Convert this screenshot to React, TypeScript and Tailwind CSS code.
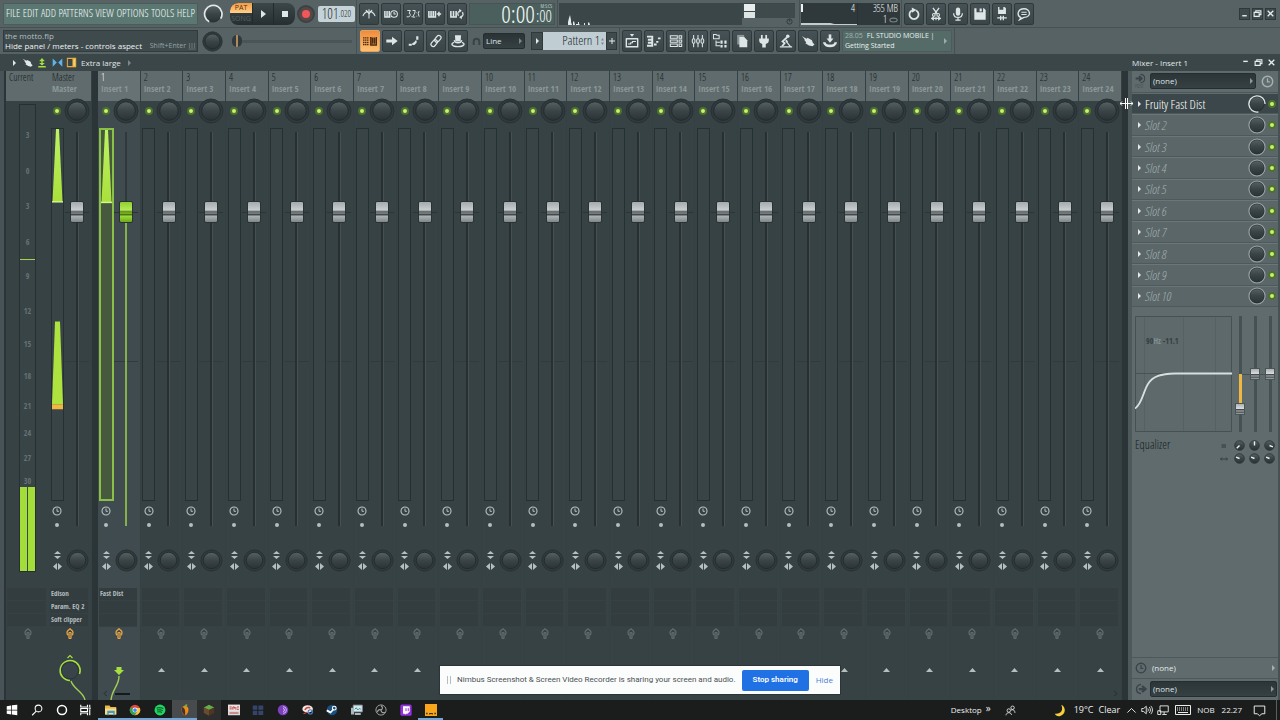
import React from "react";

const NARROW =
  "font-light font-['Open_Sans_Condensed_Light','Open_Sans_Condensed','Liberation_Sans_Narrow','Open_Sans',sans-serif]";
const NARROW_BOLD = "font-bold font-['Open_Sans_Condensed','Liberation_Sans_Narrow','Open_Sans',sans-serif]";
const SANS = "font-['Open_Sans','Noto_Sans',sans-serif]";

type IconProps = { children: React.ReactNode; size?: number; className?: string };

function Icon({ children, size = 16, className = "" }: IconProps) {
  return (
    <svg
      viewBox="0 0 16 16"
      width={size}
      height={size}
      className={"shrink-0 " + className}
      fill="none"
      stroke="currentColor"
      strokeWidth="1.2"
      aria-hidden="true"
    >
      {children}
    </svg>
  );
}

function Defs() {
  return (
    <svg className="absolute size-0" aria-hidden="true">
      <defs>
        <linearGradient id="knob" x1="0" y1="0" x2="0" y2="1">
          <stop offset="0" stopColor="#566164" />
          <stop offset="0.5" stopColor="#3a4447" />
          <stop offset="1" stopColor="#2a3235" />
        </linearGradient>
        <linearGradient id="meter" x1="0" y1="0" x2="0" y2="1">
          <stop offset="0" stopColor="#bdf264" />
          <stop offset="1" stopColor="#a9e03a" />
        </linearGradient>
      </defs>
    </svg>
  );
}

function Knob({ label, size = 26, ring }: { label: string; size?: number; ring?: "light" | "dim" | "part" }) {
  return (
    <button aria-label={label} className="block shrink-0 rounded-full">
      <svg viewBox="0 0 26 26" width={size} height={size} aria-hidden="true">
        {!ring && <circle cx="13" cy="13" r="12" fill="#303a3d" stroke="#283134" />}
        <circle cx="13" cy="13" r={ring ? 10.5 : 9.3} fill="url(#knob)" stroke="#222a2c" strokeWidth="1" />
        {ring === "light" && <path d="M8 23A11.300 11.300 0 1 1 23 19" fill="none" stroke="#e2e8e9" strokeWidth="2.200" />}
        {ring === "part" && <path d="M15 24.500A11.700 11.700 0 1 1 24.700 13" fill="none" stroke="#dbe2e3" strokeWidth="2" />}
        {ring === "dim" && <circle cx="13" cy="13" r="11.700" fill="none" stroke="#9aa5a6" strokeWidth="1.500" />}
      </svg>
    </button>
  );
}

function Led({ label }: { label: string }) {
  return (
    <input
      type="checkbox"
      defaultChecked
      aria-label={label}
      className="block size-2 shrink-0 appearance-none rounded-full border-2 border-[#4f7030] bg-[#c4f56c]"
    />
  );
}

function ClockIcon({ size = 10, className = "" }: { size?: number; className?: string }) {
  return (
    <Icon size={size} className={className}>
      <circle cx="8" cy="8" r="6.4" strokeWidth="1.8" />
      <path d="M8 4v4.500h3" strokeWidth="1.6" />
    </Icon>
  );
}

function Tri({ className = "" }: { className?: string }) {
  return (
    <svg viewBox="0 0 3 6" width="3" height="6" className={"shrink-0 " + className} fill="currentColor" aria-hidden="true">
      <path d="M0 0l3 3-3 3z" />
    </svg>
  );
}

function ToolButton({ label, active, children }: { label: string; active?: boolean; children: React.ReactNode }) {
  return (
    <button
      aria-label={label}
      className={
        "flex h-[22px] w-5 shrink-0 items-center justify-center rounded-xs border " +
        (active
          ? "border-[#e0a060] bg-linear-to-b from-[#f08c3c] to-[#ffc070] text-[#4a2a10]"
          : "border-[#2f393c] bg-linear-to-b from-[#465255] to-[#3a4548] text-[#dde5e6]")
      }
    >
      <Icon size={14}>{children}</Icon>
    </button>
  );
}

const rowOneTools: [string, React.ReactNode][] = [
  ["Metronome", <g key="a"><path d="M8 13V2.500M7 5C4 5.500 2 7.500 1 10.500M9 5c3 .5 5 2.500 6 5.500" /><path d="M4.500 3.500L8 7.500l3.500-4" strokeWidth="1.500" /></g>],
  ["Wait for input", <g key="a"><path d="M1 4.500v7h6.500M3.500 4.500v6M6 4.500v6" strokeWidth="1.700" /><circle cx="11.500" cy="8" r="3.800" /><path d="M11.500 5.800V8h2" /></g>],
  ["Countdown", <g key="a"><path d="M1.500 4h3.500L3.500 7.200c2.200 0 1.800 4-.8 4H.8M7.500 4h3L10 7 7.500 11.500h3M5.700 11h.6M12 6.500h.8M12 10.500h.8M15 4.500l-1 3 1 3.500" strokeWidth="1.100" /></g>],
  ["Overdub", <g key="a"><path d="M1 4.500v7h7.500v-7M3.500 4.500v6M6 4.500v6" strokeWidth="1.800" /><path d="M10 8h5M12.500 5.500v5" strokeWidth="1.800" /></g>],
  ["Loop record", <g key="a"><path d="M1 4.500v7h6v-7M4 4.500v6" strokeWidth="1.800" /><path d="M9.800 10A3.500 3.500 0 0 1 11.500 4.300M14 6a3.500 3.500 0 0 1-1.700 5.700" strokeWidth="1.400" /><path d="M10.500 2l3 2.200-3 2.300zM13.500 9.500l-3 2.200 3 2.300z" fill="currentColor" stroke="none" /></g>],
];

const rowTwoTools: [string, React.ReactNode][] = [
  ["Typing keyboard", <g key="a"><path d="M0 4.500h7M0 7h7M0 9.500h7M0 12h7" strokeDasharray="1.700 0.600" strokeWidth="1.500" /><path d="M9 3.500v9h6.500v-9M11.100 4v7M13.300 4v7" strokeWidth="1.800" /></g>],
  ["Auto scroll", <path key="a" d="M1.500 6.200H8V3.200L14.500 8 8 12.800v-3H1.500z" fill="currentColor" stroke="none" />],
  ["Step edit", <g key="a"><path d="M2 13.500h3.500V11H2zM6 12.500h2.500L11 10V7.500H9.500L8.500 9 6 10.500zM10.500 6.500h2.500V2.500h-2.500z" fill="currentColor" stroke="none" /></g>],
  ["Link", <g key="a" transform="rotate(-50 8 8)"><rect x="0.500" y="5.500" width="8.500" height="5" rx="2.500" strokeWidth="1.400" /><rect x="7" y="5.500" width="8.500" height="5" rx="2.500" strokeWidth="1.400" /></g>],
  ["Multilink", <g key="a"><path d="M4.500 1.500h7l-.5 7H5z" fill="currentColor" stroke="none" /><path d="M4 7c-1 4 9 4 8 0M3.500 9.500C-1 11 1 14.500 8 14.500s9-3.500 4.500-5" strokeWidth="1.500" /></g>],
];

const windowTools: [string, React.ReactNode][] = [
  ["Playlist", <g key="a"><path d="M5.500 0h5L8 3z" fill="currentColor" stroke="none" /><path d="M1 5.500h14M1.500 5v9.500h13V5" strokeWidth="1.600" /><path d="M3.500 11.500h3V10h2V8.500h4" /></g>],
  ["Piano roll", <g key="a"><path d="M0 3h6v10.500H0M1 6.500h4M1 10h4" strokeWidth="2.200" /><path d="M8 12h3M10.500 9h2.500M12.500 5h3" strokeWidth="2.200" /></g>],
  ["Channel rack", <g key="a"><path d="M1.500 2h8v2.800h-8zM1.500 6.800h8v2.700h-8zM1.500 11.500h8v2.800h-8zM11.500 2h3v2.800h-3zM11.500 6.800h3v2.700h-3zM11.500 11.500h3v2.800h-3z" /></g>],
  ["Mixer", <g key="a"><path d="M3 1v14M8 1v14M13 1v14" strokeWidth="1.200" /><rect x="1.500" y="5.500" width="3" height="5" rx="1.300" fill="#465255" /><rect x="6.500" y="5.500" width="3" height="5" rx="1.300" fill="#465255" /><rect x="11.500" y="5.500" width="3" height="5" rx="1.300" fill="#465255" /></g>],
  ["Browser", <g key="a"><path d="M.5.500h3l1 1H7v4H.5zM3.500 7.500v6H8M3.500 9.500H8" /><path d="M8.500 7.500h2.500V11H8.500zM8.500 12.500h2.500v3H8.500zM13 7.500h2.500V11H13zM13 12.500h2.500v3H13z" fill="currentColor" stroke="none" /></g>],
  ["Copy", <g key="a"><path d="M2.500 1h8v11h-8z" fill="#8c9698" stroke="none" /><path d="M5 3.500h5.500L14 7v8H5z" fill="currentColor" stroke="none" /></g>],
  ["Plugin picker", <g key="a"><path d="M2.500 5h11v2.500c0 2.500-2 3.500-3.500 4V15.500H6v-4c-1.500-.5-3.500-1.500-3.500-4zM4.500 1h2v4h-2zM9.500 1h2v4h-2z" fill="currentColor" stroke="none" /></g>],
  ["Tempo tapper", <g key="a"><circle cx="10" cy="2.500" r="2" fill="currentColor" stroke="none" /><path d="M9 4L4 8.500l2.500 2L3.500 14M8 7l1.500 2.500" strokeWidth="2" /><path d="M8 8l5 6.500M1 14.700h14" strokeWidth="1.400" /></g>],
  ["Touch", <g key="a"><path d="M1 2.500l5.500 2.800 1-1L12.500 7l1 3 2 2-2.500 2-4-.8-4-2.700 1-.8L4.800 8 3.500 6.700l1-.5z" fill="currentColor" stroke="none" /></g>],
  ["Downloads", <g key="a"><path d="M8 .5V6" strokeWidth="3" /><path d="M4 5h8l-4 5z" fill="currentColor" stroke="none" /><path d="M1.500 9.500c0 5.500 13 5.500 13 0" strokeWidth="3" /></g>],
];

const fileTools: [string, React.ReactNode][] = [
  ["Undo", <g key="a"><path d="M5.500 4A5.200 5.200 0 1 0 10.500 4" strokeWidth="2" /><path d="M5.500 0.500l5.500 3-5.500 3z" fill="currentColor" stroke="none" /></g>],
  ["Cut", <g key="a"><path d="M4.500 1l5 7M11.500 1l-5 7M3 13h10" strokeWidth="1.500" /><path d="M5 11.500v3L3 13zM11 11.500v3l2-1.500zM8 11v4" /><circle cx="5.500" cy="9" r="1.500" /><circle cx="10.500" cy="9" r="1.500" /></g>],
  ["Record", <g key="a"><rect x="5.500" y="0.500" width="5" height="9.500" rx="2.500" fill="currentColor" stroke="none" /><path d="M3 7c0 6.500 10 6.500 10 0M8 12v3M5 15h6" strokeWidth="1.400" /></g>],
  ["Save", <path key="a" d="M1.500 1.500H4V6h7.500V1.500h1l2 2v11h-13zM7.500 1.800h2.500v3.400H7.500z" fill="currentColor" stroke="none" />],
  ["Save new version", <g key="a"><path d="M3.500 0H5v3h4.500V0H11l1.500 1.500V8h-9z" fill="currentColor" stroke="none" /><path d="M2.500 12.500h11M6.500 10v5M9.500 10v5" strokeWidth="1.500" /></g>],
  ["Chat", <g key="a"><path d="M4.500 12C-1 9.500 1 2 8 2s9.500 9.500 0 9.800L3 14.500z" strokeWidth="1.500" /><path d="M5 6h6M5 8.500h6" /></g>],
];

const menus = ["FILE", "EDIT", "ADD", "PATTERNS", "VIEW", "OPTIONS", "TOOLS", "HELP"];

function WindowButtons({ boxed }: { boxed?: boolean }) {
  const box = boxed
    ? "flex h-3 w-[11px] items-center justify-center border border-[#2f393c] bg-[#404b4e]"
    : "flex h-3 w-[11px] items-center justify-center";
  return (
    <div className="flex gap-[2px] text-[#e6ecec]">
      <button aria-label="Minimize" className={box}>
        <Icon size={9}><path d={boxed ? "M4 12h8" : "M4 6h8"} strokeWidth="2.500" /></Icon>
      </button>
      <button aria-label="Restore" className={box}>
        <Icon size={9}><path d="M2 6h9v7H2zM5 5.500V3h9v7h-2.500" strokeWidth="2" /></Icon>
      </button>
      <button aria-label="Close" className={box}>
        <Icon size={9}><path d="M3 3l10 10M13 3L3 13" strokeWidth="2.200" /></Icon>
      </button>
    </div>
  );
}

function Divider() {
  return <div className="w-px shrink-0 self-stretch bg-[#465154]" />;
}

function ToolbarTop() {
  return (
    <div className="flex h-[28px] items-center border-b border-[#465154] pl-[3px] pr-1">
      <nav className={"flex h-[22px] w-[195px] shrink-0 items-center justify-between border border-[#4b5c5a] bg-[#5b7772] px-[2px] text-[11px] text-[#f2f8f7] " + NARROW}>
        {menus.map((m) => (
          <button key={m}>{m}</button>
        ))}
      </nav>
      <div className="flex w-[29px] shrink-0 justify-center">
        <Knob label="Main volume" size={20} ring="light" />
      </div>
      <div className="ml-[3px] flex h-[22px] w-[65px] shrink-0 overflow-hidden rounded-lg bg-linear-to-b from-[#3c474a] to-[#262e31] text-[#dfe6e7]">
        <div className={"flex w-[22px] flex-col text-center text-[7px]/[10px] " + SANS}>
          <button className="h-[10px] rounded-tl-lg bg-linear-to-b from-[#f79a3e] to-[#ffd08a] text-[#5a3008]">PAT</button>
          <button className="h-3 text-[#566164]">SONG</button>
        </div>
        <button aria-label="Play" className="flex w-[22px] items-center justify-center border-x border-[#222a2c]">
          <svg viewBox="0 0 5 8" width="5" height="8" fill="currentColor" aria-hidden="true"><path d="M0 0l5 4-5 4z" /></svg>
        </button>
        <button aria-label="Stop" className="flex flex-1 items-center justify-center">
          <span className="size-[6px] bg-current" />
        </button>
      </div>
      <button aria-label="Record" className="ml-[2px] flex size-[18px] shrink-0 items-center justify-center rounded-full border-2 border-[#3a4245] bg-[#574848]">
        <span className="size-2 rounded-full bg-[#f0565a]" />
      </button>
      <div className={"ml-[3px] flex h-4 w-[37px] shrink-0 items-center justify-center rounded-xs bg-[#c5d3d8] text-[#1f2a2e] " + NARROW}>
        <span className="text-[14px]">101</span>
        <span className="text-[9px]">.020</span>
      </div>
      <div className="ml-px flex self-stretch"><Divider /></div>
      <div className="ml-[2px] flex gap-[2px]">
        {rowOneTools.map(([l, g]) => <ToolButton key={l} label={l}>{g}</ToolButton>)}
      </div>
      <div className={"ml-[2px] flex h-[22px] w-[86px] shrink-0 items-center justify-end gap-px border border-[#445553] bg-[#4b605d] pr-[2px] text-[#f2f8f7] " + NARROW}>
        <span className="text-[24px]/[20px]">0:00</span>
        <span className="flex flex-col items-end">
          <span className="text-[5px]/[5px]">M:S:CS</span>
          <span className="text-[16px]/[15px]">:00</span>
        </span>
      </div>
      <div className="ml-[2px] flex self-stretch"><Divider /></div>
      <div className="ml-px flex h-[22px] w-[183px] shrink-0 items-end bg-[#3b4649] pl-[9px]">
        <svg viewBox="0 0 26 14" width="26" height="14" fill="#e4eaea" aria-hidden="true">
          <path d="M0 14v-3l1-4 1-3 1 5v2l1 3zM5 14v-3l1-1 1 4zM8 14v-1h2v-2h1v2l1 1zM16 14v-2h1v2zM20 14v-2l1-1 1 3z" />
        </svg>
      </div>
      <div className="flex h-[22px] w-[53px] shrink-0 flex-col border-t border-[#3b4649]">
        <div className="flex h-[15px] bg-[#3f4a4d]">
          <div className="flex w-[13px] flex-col gap-px pl-[2px]">
            <div className="h-[7px] bg-[#e8ecec]" />
            <div className="h-[6px] bg-[#dfe5e5]" />
          </div>
        </div>
        <Icon size={7} className="ml-auto mr-[2px] text-[#2f393c]"><circle cx="8" cy="8" r="6" strokeWidth="2" /><path d="M8 3v5" strokeWidth="3" /></Icon>
      </div>
      <div className="ml-1 flex self-stretch"><Divider /></div>
      <div className={"ml-px flex h-[22px] w-[99px] shrink-0 bg-[#2f393c] text-[10px]/[11px] text-[#f1f5f5] " + NARROW}>
        <div className="flex w-[57px] flex-col justify-between border-r border-[#283133]">
          <div className="flex h-[11px] items-start justify-between pr-[2px]">
            <span className="mt-px h-2 w-[2px] bg-[#eef2f2]" />
            <span>4</span>
          </div>
          <svg viewBox="0 0 57 3" className="h-[3px] w-full" preserveAspectRatio="none" aria-hidden="true">
            <path d="M0 3V1h30l4 1h23v1z" fill="#c4cccd" />
          </svg>
        </div>
        <div className="flex flex-1 flex-col items-end pr-[2px]">
          <span>355 MB</span>
          <span className="flex items-center gap-[2px]">1 <Icon size={9} className="text-[#788385]"><ellipse cx="8" cy="9" rx="6.500" ry="3.500" strokeWidth="2" /></Icon></span>
        </div>
      </div>
      <div className="ml-px flex self-stretch"><Divider /></div>
      <div className="ml-[2px] flex gap-[2px]">
        {fileTools.map(([l, g]) => <ToolButton key={l} label={l}>{g}</ToolButton>)}
      </div>
      <div className="ml-auto"><WindowButtons boxed /></div>
    </div>
  );
}

function ToolbarBottom() {
  return (
    <div className="flex h-[26px] items-center pl-[3px]">
      <div className={"flex h-[22px] w-[195px] shrink-0 flex-col border border-[#323c3f] bg-[#3f4a4d] px-px text-[8px]/[10px] " + SANS}>
        <span className="text-[#b4bfc0]">the motto.flp</span>
        <span className="flex items-center whitespace-nowrap text-[#eef2f2]">
          Hide panel / meters - controls aspect
          <span className="ml-auto text-[7px] text-[#98a3a5]">Shift+Enter</span>
          <Icon size={8} className="ml-[2px] text-[#66716f]"><path d="M3 2v10M8 2v10M13 2v10M1 14h14" strokeWidth="2.400" /></Icon>
        </span>
      </div>
      <div className="flex w-[29px] shrink-0 justify-center">
        <Knob label="Main pitch" size={21} />
      </div>
      <input
        type="range"
        aria-label="Song position"
        defaultValue={0}
        className="ml-[5px] h-3 w-[120px] shrink-0 appearance-none bg-[linear-gradient(#4a5558,#4a5558)] bg-[length:100%_3px] bg-center bg-no-repeat [&::-webkit-slider-thumb]:h-3 [&::-webkit-slider-thumb]:w-[10px] [&::-webkit-slider-thumb]:appearance-none [&::-webkit-slider-thumb]:rounded-full [&::-webkit-slider-thumb]:bg-[linear-gradient(90deg,#30393c_4px,#b08a5c_4px,#b08a5c_6px,#30393c_6px)]"
      />
      <div className="ml-[4px] flex self-stretch"><Divider /></div>
      <div className="ml-[3px] flex gap-[2px]">
        {rowTwoTools.map(([l, g], i) => <ToolButton key={l} label={l} active={i === 0}>{g}</ToolButton>)}
      </div>
      <Icon size={9} className="ml-1 text-[#39444a]"><path d="M3 14V8c0-6.500 10-6.500 10 0v6" strokeWidth="3.500" /></Icon>
      <div className="relative ml-[2px] shrink-0">
        <select aria-label="Snap" className={"block h-4 w-[42px] appearance-none rounded-xs border border-[#252d30] bg-linear-to-b from-[#2a3336] to-[#364144] px-[2px] text-[8px] text-[#dfe6e7] " + SANS}>
          <option>Line</option>
        </select>
        <Tri className="pointer-events-none absolute right-[3px] top-[5px] text-[#7a8587]" />
      </div>
      <button aria-label="Previous pattern" className="ml-[6px] flex h-[18px] w-3 shrink-0 items-center justify-center border border-[#2f393c] bg-[#404b4e] text-[#e6ecec]"><Tri /></button>
      <button className={"flex h-[18px] w-[63px] shrink-0 items-center justify-end gap-px bg-[#c0ced4] pr-[2px] text-[13px] text-[#1d282c] " + NARROW}>
        Pattern 1
        <svg viewBox="0 0 3 7" width="3" height="7" fill="#7d8b90" aria-hidden="true"><path d="M0 2.500L1.500 0 3 2.500zM0 4.500L1.500 7 3 4.500z" /></svg>
      </button>
      <button aria-label="Add pattern" className="flex h-[18px] w-[11px] shrink-0 items-center justify-center border border-[#2f393c] bg-[#404b4e] text-[#e6ecec]"><Icon size={8}><path d="M2 8h12M8 2v12" strokeWidth="2" /></Icon></button>
      <div className="ml-[2px] flex self-stretch"><Divider /></div>
      <div className="ml-[2px] flex gap-[2px]">
        {windowTools.map(([l, g]) => <ToolButton key={l} label={l}>{g}</ToolButton>)}
      </div>
      <div className={"ml-[2px] flex h-[22px] w-[110px] shrink-0 items-center justify-between border border-[#4b5c5a] bg-[#546b68] pl-[2px] pr-1 text-[7px]/[10px] text-[#e9f0ef] " + SANS}>
        <div className="whitespace-nowrap">
          <div><span className="mr-1 text-[#a5b5b3]">28.05</span>FL STUDIO MOBILE |</div>
          <div>Getting Started</div>
        </div>
        <Tri className="text-[#9cadab]" />
      </div>
      <div className="ml-[2px] flex self-stretch"><Divider /></div>
    </div>
  );
}

function MixerTitle() {
  return (
    <div className={"flex h-[17px] items-center bg-[#3b4649] pl-[13px] pr-[3px] text-[8px] text-[#e0e7e8] " + SANS}>
      <Tri className="mr-[6px]" />
      <Icon size={11}><path d="M1 2.500l5.500 2.800 1-1L12.500 7l1 3 2 2-2.500 2-4-.8-4-2.700 1-.8L4.800 8 3.500 6.700l1-.5z" fill="currentColor" stroke="none" /></Icon>
      <Icon size={10} className="ml-1 text-[#a6e03f]"><path d="M8 2v9M2 14h12" strokeWidth="2.200" /><path d="M8 0l4.500 5h-9zM3.500 8h9L8 12z" fill="currentColor" stroke="none" /></Icon>
      <Icon size={11} className="ml-[5px] text-[#5fb4ea]"><path d="M1 2v12l6-6zM15 2v12l-6-6z" fill="currentColor" stroke="none" /></Icon>
      <Icon size={11} className="ml-[3px] text-[#e8a93c]"><path d="M2 2h12v12H2z" strokeWidth="1.500" /><path d="M10 2h4v12h-4z" fill="#f3d06a" /></Icon>
      <span className="ml-1">Extra large</span>
      <Tri className="ml-[7px] text-[#7c8789]" />
      <div className="ml-auto flex w-[145px] items-center justify-between">
        <span>Mixer - Insert 1</span>
        <WindowButtons />
      </div>
    </div>
  );
}

function SwitchIcon({ on }: { on?: boolean }) {
  return (
    <Icon size={12} className={on ? "text-[#e8a844]" : "text-[#606b6d]"}>
      <path d="M5.500 9.500C3.500 8 3.500 4.500 5.500 3.200L8 1l2.500 2.200c2 1.300 2 4.800 0 6.300" strokeWidth="1.700" />
      <path d="M6.500 6h3v8h-3z" fill={on ? "#8c6a48" : "#4d585b"} strokeWidth="1.300" />
    </Icon>
  );
}

function Slots({ names = [] }: { names?: string[] }) {
  return (
    <ul className={"mr-[3px] ml-px h-[39px] shrink-0 bg-[#333d40] text-[7px]/[12px] text-[#b4bebf] " + NARROW_BOLD}>
      {[0, 1, 2].map((i) => (
        <li key={i} className="h-[13px] overflow-hidden whitespace-nowrap border-b border-[#364144] pl-px">{names[i]}</li>
      ))}
    </ul>
  );
}

function Fader({ label, selected }: { label: string; selected?: boolean }) {
  const base =
    "absolute inset-0 h-full w-[14px] appearance-none bg-center bg-no-repeat [direction:rtl] [writing-mode:vertical-lr] [&::-webkit-slider-thumb]:h-[22px] [&::-webkit-slider-thumb]:w-[14px] [&::-webkit-slider-thumb]:appearance-none [&::-webkit-slider-thumb]:rounded-xs [&::-webkit-slider-thumb]:border [&::-webkit-slider-thumb]:border-[#2a3235] ";
  const look = selected
    ? "bg-[linear-gradient(#2f393c_20%,#86b04a_20%)] bg-[length:2px_100%] [&::-webkit-slider-thumb]:bg-[linear-gradient(#8fd02c,#b6ea58_40%,#4f7a14_50%,#8ccb2a_55%,#3f6410_64%,#9bdc36_70%,#6fa81c)]"
    : "bg-[linear-gradient(90deg,#272f32,#272f32_66%,#455053_66%)] bg-[length:3px_100%] [&::-webkit-slider-thumb]:bg-[linear-gradient(#a4abad,#c9cecf_40%,#4b5255_50%,#8e9597_55%,#33393b_64%,#adb3b5_70%,#7f8688)]";
  return <input type="range" min={0} max={1000} defaultValue={815} aria-label={label} className={base + look} />;
}

function MeterShape({ master }: { master?: boolean }) {
  return (
    <svg viewBox="0 0 11 372" className="absolute inset-0 size-full" preserveAspectRatio="none" aria-hidden="true">
      <path d="M4 0h3l3.500 73H.5z" fill="url(#meter)" />
      <path d="M0 73h11" stroke="#d2f58c" strokeWidth="1.500" />
      {master && (
        <g>
          <path d="M3 193h5l3 83H0z" fill="#aee23f" />
          <path d="M0 276h11v5H0z" fill="#f0b840" />
        </g>
      )}
    </svg>
  );
}

type StripProps = { title: string; name: string; selected?: boolean; master?: boolean; slots?: string[] };

function Strip({ title, name, selected, master, slots }: StripProps) {
  return (
    <section className={"flex min-w-0 flex-col border-r border-[#344043] " + (selected ? "bg-[#3f4b4e]" : "bg-[#374245]")}>
      <header className={"h-[30px] shrink-0 pl-[3px] whitespace-nowrap " + (selected ? "bg-[#667274]" : "bg-[#5f6b6d]")}>
        <div className={"text-[10px]/[12px] " + NARROW + (selected ? " text-white" : " text-[#161e20]")}>{title}</div>
        <div className={"text-[9px]/[11px] text-[#8b9798] " + NARROW_BOLD}>{name}</div>
      </header>
      <div className="-mt-[3px] flex h-[26px] shrink-0 items-center">
        <div className="flex w-4 justify-center"><Led label={title + " mute"} /></div>
        <div className="flex w-6 justify-center"><Knob label={title + " pan"} /></div>
      </div>
      <div className="flex min-h-[200px] flex-1">
        <div className="flex w-4 flex-col items-center pt-1 pb-[3px]">
          <div className={"relative flex-1 " + (selected ? "w-[15px] border-2 border-[#8abf48] bg-[#46593f]" : "w-[13px] border border-[#262f32] bg-[#394447]")}>
            {(selected || master) && <MeterShape master={master} />}
          </div>
          <div className="flex h-5 items-center text-[#b5bfc0]"><ClockIcon /></div>
          <div className="flex h-2 items-center"><span className="size-1 rounded-full bg-[#b5bfc0]" /></div>
        </div>
        <div className="relative flex w-6 justify-center pt-2 pb-[6px]">
          <div className="absolute inset-x-0 top-[88px] h-px bg-[#2b3437]" />
          <div className="absolute inset-x-0 top-[237px] h-px bg-[#313b3e]" />
          <div className="relative w-[14px]"><Fader label={title + " volume"} selected={selected} /></div>
        </div>
      </div>
      <div className="flex h-14 shrink-0 items-center">
        <div className="flex w-4 flex-col items-center gap-1 text-[#b5bfc0]">
          <svg viewBox="0 0 7 8" width="7" height="8" fill="currentColor" aria-hidden="true"><path d="M0 3L3.500 0 7 3zM0 5h7L3.500 8z" /></svg>
          <svg viewBox="0 0 9 7" width="9" height="7" fill="currentColor" aria-hidden="true"><path d="M4 0v7L0 3.500zM5 0v7l4-3.500z" /></svg>
        </div>
        <div className="flex w-6 justify-center"><Knob label={title + " stereo separation"} size={23} /></div>
      </div>
      <Slots names={slots} />
      <div className="flex h-[14px] shrink-0 items-center justify-center"><SwitchIcon on={selected || master} /></div>
      <div className="flex h-[59px] shrink-0 justify-center">
        {master ? (
          <svg viewBox="0 0 43 59" width="43" height="59" fill="none" className="shrink-0" aria-hidden="true">
            <path d="M18.500 17l2.500-2.500 2.500 2.500" stroke="#a6e03f" strokeWidth="1.200" />
            <circle cx="21" cy="29.500" r="8.500" fill="#39444a" stroke="#2a3235" />
            <path d="M21 39.500A10 10 0 1 1 30.500 33" stroke="#a6e03f" strokeWidth="1.500" />
            <path d="M22 40c3 9 12 10 14 19" stroke="#a2cf57" strokeWidth="1.400" />
          </svg>
        ) : selected ? (
          <svg viewBox="0 0 42 59" width="42" height="59" fill="none" className="shrink-0" aria-hidden="true">
            <path d="M18.500 26h5v3h2.500l-5 5-5-5h2.500z" fill="#a6e03f" />
            <path d="M21 35c0 10-7 13-8 24" stroke="#a2cf57" strokeWidth="1.400" />
          </svg>
        ) : (
          <svg viewBox="0 0 7 59" width="7" height="59" fill="#b5bfc0" aria-hidden="true"><path d="M0 31l3.500-4L7 31z" /></svg>
        )}
      </div>
    </section>
  );
}

const scale: [string, string][] = [
  ["3", "h-[35px]"], ["0", "h-[36px]"], ["3", "h-[35px]"], ["6", "h-[36px]"], ["9", "h-[34px]"], ["12", "h-[35px]"],
  ["15", "h-[33px]"], ["18", "h-[32px]"], ["21", "h-[30px]"], ["24", "h-[27px]"], ["27", "h-[25px]"], ["30", "h-[23px]"],
];

function CurrentStrip() {
  return (
    <section className="flex w-[43px] flex-col bg-[#374245]">
      <header className={"h-[30px] shrink-0 bg-[#5f6b6d] pl-[3px] text-[10px]/[12px] text-[#161e20] " + NARROW}>Current</header>
      <div className="relative mx-[13px] mt-[3px] mb-4 flex flex-1 flex-col border border-[#262f32] bg-[#394447]">
        {scale.map(([n, h], i) => (
          <div key={i} className={"flex shrink-0 items-end justify-center text-[8px]/[11px] text-[#677274] " + h + " " + NARROW_BOLD}>{n}</div>
        ))}
        <div className="absolute inset-x-0 top-[154px] h-px bg-[#a6d24a]" />
        <div className="absolute inset-x-0 bottom-0 grid h-[84px] grid-cols-2 gap-px">
          <div className="bg-[#a3dd3a]" />
          <div className="bg-[#a3dd3a]" />
        </div>
      </div>
      <Slots />
      <div className="flex h-[14px] shrink-0 items-center justify-center"><SwitchIcon /></div>
      <div className="h-[59px] shrink-0" />
    </section>
  );
}

function EqFader({ label, value, lit }: { label: string; value: number; lit?: boolean }) {
  return (
    <input
      type="range"
      aria-label={label}
      defaultValue={value}
      className={
        "h-[116px] w-[10px] appearance-none bg-center bg-no-repeat [direction:rtl] [writing-mode:vertical-lr] bg-[length:3px_100%] [&::-webkit-slider-thumb]:h-3 [&::-webkit-slider-thumb]:w-[10px] [&::-webkit-slider-thumb]:appearance-none [&::-webkit-slider-thumb]:border [&::-webkit-slider-thumb]:border-[#4b5557] [&::-webkit-slider-thumb]:bg-[linear-gradient(#aab1b3,#d6dadb_45%,#454c4f_55%,#9ba2a4_70%,#4b5255_82%,#a9b0b2)] " +
        (lit ? "bg-[linear-gradient(#465154_50%,#f0b840_50%,#f0b840_78%,#465154_78%)]" : "bg-[linear-gradient(#465154,#465154)]")
      }
    />
  );
}

function MiniKnob({ label, d }: { label: string; d: string }) {
  return (
    <button aria-label={label}>
      <Icon size={11}>
        <circle cx="8" cy="8" r="7" fill="url(#knob)" stroke="#2b3336" />
        <path d={d} stroke="#eef2f2" strokeWidth="2" />
      </Icon>
    </button>
  );
}

function DarkSelect({ label }: { label: string }) {
  return (
    <div className="relative flex-1">
      <select aria-label={label} className={"block h-4 w-full appearance-none rounded-xs border border-[#252d30] bg-linear-to-b from-[#2c3538] to-[#364144] px-[2px] text-[8px] text-[#dfe6e7] " + SANS}>
        <option>(none)</option>
      </select>
      <Tri className="pointer-events-none absolute right-[3px] top-[5px] text-[#8d989a]" />
    </div>
  );
}

function InsertPanel() {
  return (
    <aside className="flex w-[146px] shrink-0 flex-col bg-[#5f6b6d]">
      <div className="flex h-[22px] items-center border-b border-[#4c585a] pb-px pl-[3px] pr-[4px]">
        <div className={"flex w-[15px] flex-col text-[5px]/[5px] text-[#39444a] " + NARROW}>
          <Icon size={11}><path d="M1 8h8M6 4.500L9.500 8 6 11.500" strokeWidth="3" /><path d="M8 2c8 0 8 12 0 12" strokeWidth="1.500" /></Icon>
          POST
        </div>
        <DarkSelect label="Input" />
        <ClockIcon size={13} className="ml-[5px] text-[#a5b0b1]" />
      </div>
      <ol className="mt-px flex h-[213px] shrink-0 flex-col">
        {Array.from({ length: 10 }, (_, i) => (
          <li key={i} className={"flex flex-1 items-center border-b border-[#4d595b] border-t-[#6a7678] pl-[6px] pr-[2px] " + (i ? "border-t bg-[#5a6668]" : "bg-[#3b474a]")}>
            <Tri className="text-[#e4eaea]" />
            <span className={"ml-1 flex-1 text-[13px]/[14px] " + NARROW + (i ? " italic text-[#a3afb0]" : " text-white")}>
              {i ? "Slot " + (i + 1) : "Fruity Fast Dist"}
            </span>
            <Knob label={"Slot " + (i + 1) + " mix"} size={18} ring={i ? "dim" : "part"} />
            <div className="ml-[2px] flex"><Led label={"Slot " + (i + 1) + " enabled"} /></div>
          </li>
        ))}
      </ol>
      <div className="mt-[9px] flex justify-between pl-[3px] pr-[3px]">
        <div className="relative h-[116px] w-[97px]">
          <svg viewBox="0 0 97 116" width="97" height="116" fill="none" aria-hidden="true">
            <path d="M.5 .5h96v115H.5z" fill="#5d696b" stroke="#465154" />
            <path d="M9.500 1v114M48.500 1v114M80.500 1v114" stroke="#566163" />
            <path d="M1 57.500h95" stroke="#485355" />
            <path d="M0 92.500C7 88 8 76 13 68c5-8 13-10 27-10.500h57" stroke="#d8dfdf" strokeWidth="1.800" />
          </svg>
          <span className={"absolute left-[11px] top-[20px] text-[8px]/[10px] text-[#343f42] " + NARROW_BOLD}>90<span className="text-[#838f90]">Hz</span> -11.1</span>
        </div>
        <div className="relative flex">
          <div className="absolute inset-x-1 top-[58px] h-px bg-[#465154]" />
          <div className="relative flex gap-[5px]">
            <EqFader label="Low gain" value={16} lit />
            <EqFader label="Mid gain" value={50} />
            <EqFader label="High gain" value={50} />
          </div>
        </div>
      </div>
      <div className="mt-2 flex items-start justify-between pr-[3px] pl-[3px]">
        <span className={"text-[12px]/[10px] text-[#161e20] " + NARROW}>Equalizer</span>
        <div className="grid grid-cols-[10px_11px_11px_11px] items-center gap-x-1 gap-y-[2px] text-[#313b3e]">
          <Icon size={8}><path d="M3 6h9M3 10h9" strokeWidth="2" /></Icon>
          <MiniKnob label="Low frequency" d="M8 8l-4 4" />
          <MiniKnob label="Mid frequency" d="M8 8V2" />
          <MiniKnob label="High frequency" d="M8 8l5 2" />
          <Icon size={8}><path d="M1 8h14M4 5L1 8l3 3M12 5l3 3-3 3" strokeWidth="1.800" /></Icon>
          <MiniKnob label="Low width" d="M8 8L3 6" />
          <MiniKnob label="Mid width" d="M8 8L3 6" />
          <MiniKnob label="High width" d="M8 8L3 6" />
        </div>
      </div>
      <div className={"mt-auto flex h-[21px] items-center border-t border-[#4c585a] pr-[3px] pl-[3px] text-[8px] text-[#e4eaea] " + SANS}>
        <ClockIcon size={12} className="text-[#39444a]" />
        <span className="ml-[5px] flex-1">(none)</span>
        <Tri className="text-[#a5b0b1]" />
      </div>
      <div className="flex h-[22px] items-center border-t border-[#4c585a] pb-[2px] pl-[3px] pr-px">
        <Icon size={12} className="mr-[3px] text-[#39444a]"><path d="M8 2C0 2 0 14 8 14" strokeWidth="1.800" /><path d="M5 8h7M9.500 4L14 8l-4.500 4" strokeWidth="3" /></Icon>
        <DarkSelect label="Output" />
      </div>
    </aside>
  );
}

function ShareBar() {
  return (
    <div role="dialog" aria-label="Screen sharing" className="absolute bottom-[26px] left-1/2 flex h-7 w-[400px] -translate-x-1/2 items-center bg-[#fbfdfd] pl-[7px] pr-[7px] font-['Roboto',sans-serif] text-[8px] text-[#4b5153] shadow-[0_0_0_1px_#2b3437]">
      <span className="h-2 w-[4px] border-x border-[#b7bcbe]" />
      <span className="ml-[6px] flex-1 whitespace-nowrap">Nimbus Screenshot &amp; Screen Video Recorder is sharing your screen and audio.</span>
      <button className="h-[21px] w-[67px] shrink-0 rounded-xs bg-[#1f71e4] font-semibold text-white">Stop sharing</button>
      <button className={"ml-[7px] text-[#4a7fd6] " + SANS}>Hide</button>
    </div>
  );
}

const apps: { name: string; open?: boolean; shade?: string; art: React.ReactNode }[] = [
  { name: "Start", art: <path d="M1 3l6-1v5.500H1zM8 1.800L15 1v6.500H8zM1 8.500h6V14l-6-1zM8 8.500h7V15l-7-1z" fill="#fff" stroke="none" /> },
  { name: "Search", art: <g stroke="#fff"><circle cx="10" cy="6" r="4.500" strokeWidth="1.400" /><path d="M7 9.500L1.500 15" strokeWidth="1.500" /></g> },
  { name: "Cortana", art: <circle cx="8" cy="8" r="6" stroke="#fff" strokeWidth="2" /> },
  { name: "Task view", art: <path d="M1 1v3h9V1M1 15v-3h9v3M1 6h9v4H1zM13 1v3M13 7v8M11.500 5.500h3" stroke="#fff" strokeWidth="1.500" /> },
  { name: "File Explorer", open: true, art: <g stroke="none"><path d="M0 2h6l1.500 2H15v10H0z" fill="#e9b84a" /><path d="M0 6h15v8H0z" fill="#f8dc86" /><path d="M3 9h10v6h-2v-3H5v3H3z" fill="#3f9ad8" /></g> },
  { name: "Chrome", open: true, art: <g stroke="none"><circle cx="8" cy="8" r="7" fill="#dd4b39" /><path d="M8 8L1.900 4.500A7 7 0 0 0 8 15l3.500-6z" fill="#32a352" /><path d="M8 15a7 7 0 0 0 6.400-9.800H8L11 9.500z" fill="#f6c63c" /><circle cx="8" cy="8" r="3.300" fill="#fff" /><circle cx="8" cy="8" r="2.500" fill="#4285f4" /></g> },
  { name: "Spotify", open: true, art: <g><circle cx="8" cy="8" r="7.300" fill="#1ed760" stroke="none" /><path d="M3.500 5.500c3-1 6.500-.7 9 .7M4 8.200c2.500-.8 5.500-.5 7.600.7M4.500 10.700c2-.6 4.400-.4 6.200.6" stroke="#123d20" strokeWidth="1.300" /></g> },
  { name: "FL Studio", open: true, shade: "bg-[#484b4d]", art: <g stroke="none"><path d="M8 2.500c4 0 5 3 4.500 6.500S9.500 15 8 15s-4-2.500-4.500-6S4 2.500 8 2.500z" fill="#f28a1e" /><path d="M4.500 4c3 1 4.500 5 3.500 11-3-1-6-7-3.500-11z" fill="#41352a" /><path d="M7 3.500c0-2 2-3.500 4-3 0 2-1.500 3.500-4 3z" fill="#6fb53a" /></g> },
  { name: "Minecraft", shade: "bg-[#2c2d2d]", art: <g stroke="none"><path d="M8 1l7 3.500-7 3.500-7-3.500z" fill="#67ac48" /><path d="M1 4.500L8 8v7.500L1 12z" fill="#6b4a30" /><path d="M15 4.500L8 8v7.500l7-3.500z" fill="#4f3522" /></g> },
  { name: "EPIC", art: <g stroke="none"><path d="M0 1h16v14H0z" fill="#d9d9d9" /><path d="M0 1h16v8H0z" fill="#e9e4e4" /><path d="M2 4h3M2 6.500h3M6.500 7.500V4h2v2M10.500 4v3.500M12 4h2.500M12 7h2.500M2 12h12" stroke="#c23a3a" strokeWidth="1.300" /></g> },
  { name: "Tiles", art: <path d="M1 2h6v5.500H1zM8.500 2H15v5.500H8.500zM1 9h6v5.500H1zM8.500 9H15v5.500H8.500z" fill="#35446b" stroke="none" /> },
  { name: "Tor Browser", art: <g><circle cx="8" cy="8" r="7" fill="#7d3fc0" stroke="none" /><path d="M8 3.500a4.500 4.500 0 0 1 0 9M8 6a2 2 0 0 1 0 4" stroke="#d9c2f2" /></g> },
  { name: "Snipping Tool", art: <g><ellipse cx="7.500" cy="6.500" rx="7" ry="5" fill="#efe8e8" stroke="none" /><path d="M4 8c1-3 4-4 7-3" stroke="#d24a3c" strokeWidth="2.200" /><circle cx="11" cy="10.500" r="2.800" stroke="#4d86c8" strokeWidth="1.500" /><path d="M2 13l5-2" stroke="#d24a3c" strokeWidth="1.500" /></g> },
  { name: "Steam", art: <g><circle cx="8" cy="8" r="7" fill="#1a4f80" stroke="none" /><path d="M1 8.500l5.500 3M5.500 12L10 7" stroke="#fff" strokeWidth="2.300" /><circle cx="11" cy="5.500" r="2.500" stroke="#fff" strokeWidth="1.500" /></g> },
  { name: "Monitor", art: <g><path d="M3 1.500h12v9H3z" fill="#d6e7ec" stroke="#8c989c" /><path d="M0 5h4v9H0zM5 12h8v2.500H5z" fill="#aab8bc" stroke="none" /><path d="M5 7l2-2 2 3 2-2 2 1" stroke="#258a9c" /></g> },
  { name: "OBS Studio", art: <g><circle cx="8" cy="8" r="6.800" stroke="#a9adae" /><path d="M8 2.500c2.500 1 2.500 4.500 0 5.500M3.500 11c-.5-2.700 2.500-4.500 4.500-3M13 11c-2 1.700-5 0-5-3" stroke="#a9adae" strokeWidth="1.500" /></g> },
  { name: "Twitch", art: <g><rect x="0.500" y="0.500" width="15" height="15" rx="2" fill="#9430e0" stroke="none" /><path d="M4 3h9v7l-3 3H8l-1.500 1.500V13H4z" fill="#fff" stroke="none" /><path d="M8 5.500v4M11 5.500v4" stroke="#9430e0" strokeWidth="1.300" /></g> },
  { name: "Player", open: true, art: <g stroke="none"><path d="M0 0h16v16H0z" fill="#f9a61c" /><path d="M1.500 11.500h2v2h-2zM12.500 11.500h2v2h-2zM5.500 12h5v2h-1.500v-.8H7v.8H5.500z" fill="#3d2c12" /></g> },
];

function Taskbar() {
  return (
    <footer className={"flex h-5 shrink-0 items-center bg-[#1b1c1c] text-[8px] text-[#eceeee] " + SANS}>
      <div className="flex h-full w-[443px]">
        {apps.map((a) => (
          <button key={a.name} aria-label={a.name} className={"flex flex-1 items-end justify-center border-b-2 pb-[2px] " + (a.open ? "border-[#6fa8d8] " : "border-transparent ") + (a.shade ?? "")}>
            <Icon size={12}>{a.art}</Icon>
          </button>
        ))}
      </div>
      <div className="ml-auto flex items-center">
        <span>Desktop</span>
        <span className="ml-1 -mt-1 text-[10px]/[10px]">»</span>
        <Icon size={11} className="ml-[14px]"><circle cx="5.500" cy="8" r="2.500" /><circle cx="11" cy="4" r="2.500" /><path d="M1.500 15c0-5 8-5 8-.5M8.500 7.500c3-1.500 6 0 6 4" /></Icon>
        <Icon size={13} className="ml-[38px]"><path d="M9 1c6 3 6 12-2 14-3 .5-5-1-6-3 7 1 11-4 8-11z" fill="#f8cf3a" stroke="none" /></Icon>
        <span className="ml-[7px] text-[9px]">19°C</span>
        <span className="ml-[5px] text-[9px]">Clear</span>
        <Icon size={11} className="ml-[6px]"><path d="M2 11l6-6 6 6" strokeWidth="1.400" /></Icon>
        <Icon size={12} className="ml-1"><path d="M1 6h2.500L7 3v10L3.500 10H1zM9 6c1 1 1 3 0 4M11 4c2 2 2 6 0 8M13 2.500c3 3 3 8 0 11" /></Icon>
        <Icon size={12} className="ml-1"><path d="M4 2.500h11v8H4zM7 14h6M9.500 10.500V14M1 9h4v5H1z" fill="#1b1c1c" /></Icon>
        <svg viewBox="0 0 16 10" width="16" height="10" className="ml-[6px]" fill="none" stroke="currentColor" aria-hidden="true"><path d="M.5 .5h15v9H.5z" /><path d="M2 3h12M2 5h12" strokeDasharray="1 1" /><path d="M3 7.500h10" /></svg>
        <span className="ml-[6px]">NOB</span>
        <span className="ml-[7px]">22.27</span>
        <Icon size={13} className="ml-[11px]"><path d="M1.500 2.500h13v9.500H11L8 14.500 5.500 12h-4z" /></Icon>
        <span className="ml-[10px] mr-[3px] h-5 w-px bg-[#5c5f5f]" />
      </div>
    </footer>
  );
}

export default function App() {
  return (
    <div className="relative flex min-h-screen flex-col overflow-hidden bg-[#566264] select-none">
      <Defs />
      <ToolbarTop />
      <ToolbarBottom />
      <MixerTitle />
      <main className="flex flex-1 border-l-4 border-[#475356] bg-[#2b3437] pl-[2px]">
        <div className="flex w-[86px] shrink-0">
          <CurrentStrip />
          <div className="grid w-[43px]"><Strip title="Master" name="Master" master slots={["Edison", "Param. EQ 2", "Soft clipper"]} /></div>
        </div>
        <div className="relative ml-[6px] grid flex-1 grid-cols-[repeat(24,minmax(0,1fr))]">
          {Array.from({ length: 24 }, (_, i) => (
            <Strip key={i} title={String(i + 1)} name={"Insert " + (i + 1)} selected={i === 0} slots={i === 0 ? ["Fast Dist"] : []} />
          ))}
          <div className="absolute bottom-[3px] left-1 flex items-center gap-[6px] text-[#20282a]">
            <Icon size={7}><path d="M11 2L5 8l6 6" strokeWidth="2" /></Icon>
            <span className="h-[2px] w-[15px] bg-[#141a1b]" />
          </div>
          <Icon size={7} className="absolute right-[3px] bottom-[3px] text-[#20282a]"><path d="M5 2l6 6-6 6" strokeWidth="2" /></Icon>
        </div>
        <div className="relative w-[10px] shrink-0 border-r-4 border-[#4d595b] bg-[#2b3437]">
          <svg viewBox="0 0 13 13" width="13" height="13" className="absolute -left-[2px] top-[26px] z-10" fill="none" stroke="#fff" aria-hidden="true">
            <path d="M5.500 1v11M7.500 1v11" />
            <path d="M0 6.500h13M2 4.500l-2 2 2 2M11 4.500l2 2-2 2" />
          </svg>
        </div>
        <InsertPanel />
        <div className="w-[2px] bg-[#465154]" />
      </main>
      <ShareBar />
      <Taskbar />
    </div>
  );
}
